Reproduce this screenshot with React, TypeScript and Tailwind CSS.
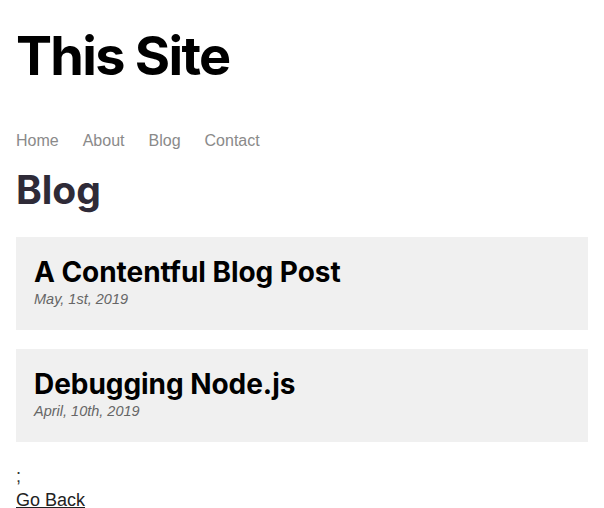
export default function App() {
  const posts = [
    { title: "A Contentful Blog Post", date: "May, 1st, 2019" },
    { title: "Debugging Node.js", date: "April, 10th, 2019" },
  ];
  return (
    <div className="min-h-[508px] bg-white px-4 text-black" style={{ fontFamily: '"Liberation Sans", Arial, sans-serif' }}>
      <header className="pt-[23px]">
        <h1 className="text-[54px] font-bold leading-[66px] tracking-[-1.7px]" style={{ fontFamily: 'Inter, sans-serif' }}>This Site</h1>
        <nav className="mt-[40px] flex gap-6 text-[16px] leading-[24px] text-[#8a8a8a]">
          <a>Home</a>
          <a>About</a>
          <a>Blog</a>
          <a>Contact</a>
        </nav>
      </header>
      <main>
        <h2 className="mt-[13px] text-[39px] font-bold leading-[48px] text-[#2f2b38]" style={{ fontFamily: 'Inter, sans-serif' }}>Blog</h2>
        <ol className="mt-[23px] flex flex-col gap-[19px]">
          {posts.map((p) => (
            <li key={p.title} className="bg-[#f0f0f0] px-[18px] pt-[18px] pb-[21px]">
              <h3 className="text-[28px] font-bold leading-[34px] tracking-[-0.05px]" style={{ fontFamily: 'Inter, sans-serif' }}>{p.title}</h3>
              <p className="text-[14.5px] italic leading-[20px] text-[#666]">{p.date}</p>
            </li>
          ))}
        </ol>
        <p className="mt-[22px] text-[18px] leading-[24px] text-[#333]">;</p>
        <a className="text-[18px] leading-[24px] text-[#222] underline">Go Back</a>
      </main>
    </div>
  );
}
